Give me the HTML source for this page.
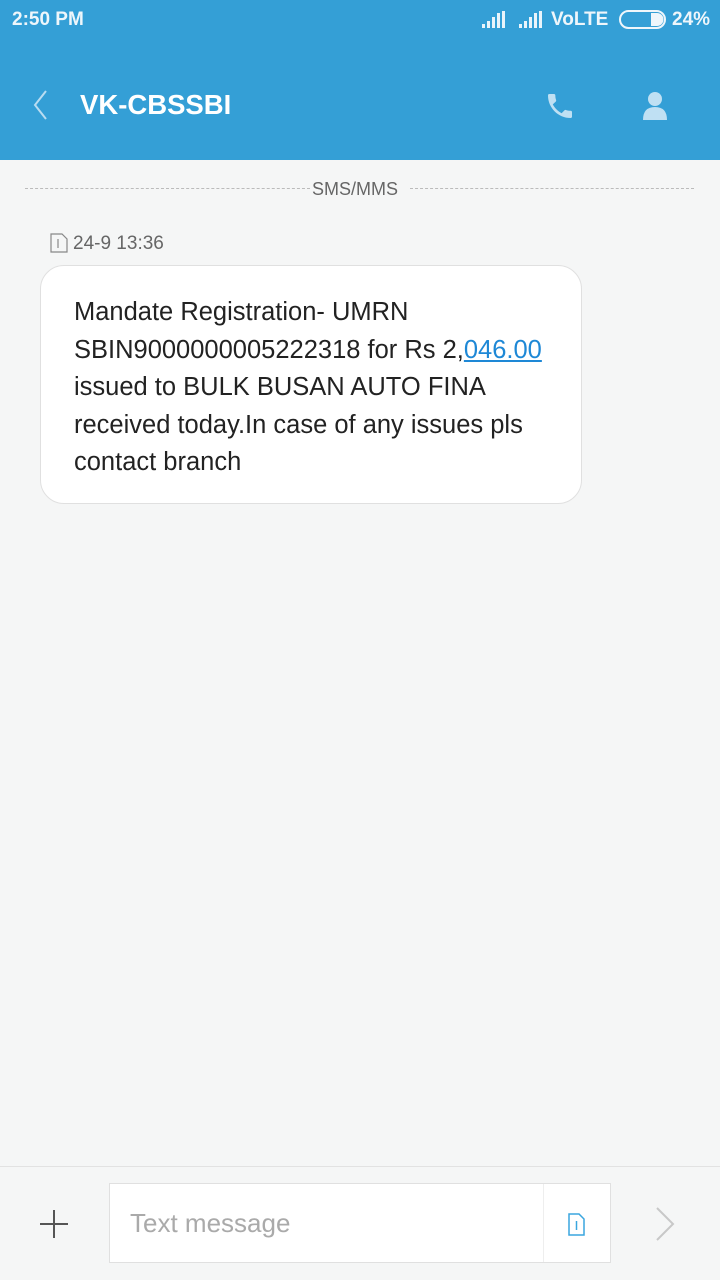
<!DOCTYPE html>
<html><head><meta charset="utf-8"><style>
*{margin:0;padding:0;box-sizing:border-box}
body{width:720px;height:1280px;background:#f5f6f6;font-family:"Liberation Sans",sans-serif;position:relative;overflow:hidden}
.hdr{position:absolute;left:0;top:0;width:720px;height:160px;background:#349fd6;color:#fff}
.abs{position:absolute}
</style></head><body>
<div class="hdr">
  <div class="abs" style="left:12px;top:9px;font-size:19px;font-weight:bold;color:#eef6fb">2:50 PM</div>
  <svg class="abs" style="left:482px;top:11px" width="90" height="18">
    <g fill="#e9f4fb"><rect x="0" y="13" width="3" height="4"/><rect x="5" y="10" width="3" height="7"/><rect x="10" y="6" width="3" height="11"/><rect x="15" y="2" width="3" height="15"/><rect x="20" y="0" width="3" height="17"/>
    <rect x="37" y="13" width="3" height="4"/><rect x="42" y="10" width="3" height="7"/><rect x="47" y="6" width="3" height="11"/><rect x="52" y="2" width="3" height="15"/><rect x="57" y="0" width="3" height="17"/></g>
  </svg>
  <div class="abs" style="left:551px;top:9px;font-size:19px;font-weight:bold;color:#eef6fb">VoLTE</div>
  <svg class="abs" style="left:619px;top:10px" width="48" height="20"><rect x="1" y="1" width="45" height="17" rx="8.5" fill="none" stroke="#eef6fb" stroke-width="2"/><path d="M32 3h6a6.5 6.5 0 0 1 0 13h-6z" fill="#eef6fb"/></svg>
  <div class="abs" style="left:672px;top:9px;font-size:19px;font-weight:bold;color:#eef6fb">24%</div>
  <svg class="abs" style="left:30px;top:89px" width="20" height="32"><path d="M16 2 L5 16 L16 30" fill="none" stroke="#b9dcf1" stroke-width="2"/></svg>
  <div class="abs" style="left:80px;top:89px;font-size:27.5px;font-weight:bold">VK-CBSSBI</div>
  <svg class="abs" style="left:544px;top:90px" width="32" height="32" viewBox="0 0 24 24"><path fill="#bfe0f3" d="M6.6 10.8c1.4 2.8 3.8 5.1 6.6 6.6l2.2-2.2c.3-.3.7-.4 1-.2 1.1.4 2.3.6 3.6.6.6 0 1 .4 1 1V20c0 .6-.4 1-1 1C10.6 21 3 13.4 3 4c0-.6.4-1 1-1h3.5c.6 0 1 .4 1 1 0 1.3.2 2.5.6 3.6.1.3 0 .7-.2 1z"/></svg>
  <svg class="abs" style="left:641px;top:90px" width="28" height="32"><circle cx="14" cy="9" r="7" fill="#bfe0f3"/><path d="M2 30 Q2 17 14 17 Q26 17 26 30z" fill="#bfe0f3"/></svg>
</div>
<div class="abs" style="left:25px;top:188px;width:285px;border-top:1px dashed #bbb"></div>
<div class="abs" style="left:410px;top:188px;width:284px;border-top:1px dashed #bbb"></div>
<div class="abs" style="left:312px;top:179px;font-size:18px;color:#666">SMS/MMS</div>
<svg class="abs" style="left:49px;top:233px" width="20" height="20"><path d="M2 1h11l5 5v13H2z" fill="none" stroke="#888" stroke-width="1.2"/><path d="M9 6v9" stroke="#888" stroke-width="1.2"/></svg>
<div class="abs" style="left:73px;top:233px;font-size:19px;color:#666">24-9 13:36</div>
<div class="abs" style="left:40px;top:265px;width:542px;height:239px;background:#fff;border:1px solid #e0e0e0;border-radius:24px"></div>
<div class="abs" style="left:74px;top:294px;font-size:25.5px;line-height:37.5px;color:#222;width:505px;white-space:nowrap">Mandate Registration- UMRN<br>SBIN9000000005222318 for Rs 2,<span style="color:#1e88d6;text-decoration:underline">046.00</span><br>issued to BULK BUSAN AUTO FINA<br>received today.In case of any issues pls<br>contact branch</div>
<div class="abs" style="left:0;top:1166px;width:720px;border-top:1px solid #e2e2e2"></div>
<svg class="abs" style="left:40px;top:1210px" width="30" height="30"><path d="M0 14h28M14 0v28" stroke="#555" stroke-width="2"/></svg>
<div class="abs" style="left:109px;top:1183px;width:502px;height:80px;background:#fff;border:1px solid #e0e0e0"></div>
<div class="abs" style="left:543px;top:1184px;width:1px;height:78px;background:#eee"></div>
<div class="abs" style="left:130px;top:1208px;font-size:26px;color:#aaa">Text message</div>
<svg class="abs" style="left:567px;top:1213px" width="20" height="24"><path d="M2 1h10l5 5v16H2z" fill="none" stroke="#3aa6df" stroke-width="1.5"/><path d="M9.5 8v9" stroke="#3aa6df" stroke-width="1.5"/></svg>
<svg class="abs" style="left:654px;top:1206px" width="24" height="36"><path d="M3 2 L19 18 L3 34" fill="none" stroke="#c8c8c8" stroke-width="2"/></svg>
</body></html>
